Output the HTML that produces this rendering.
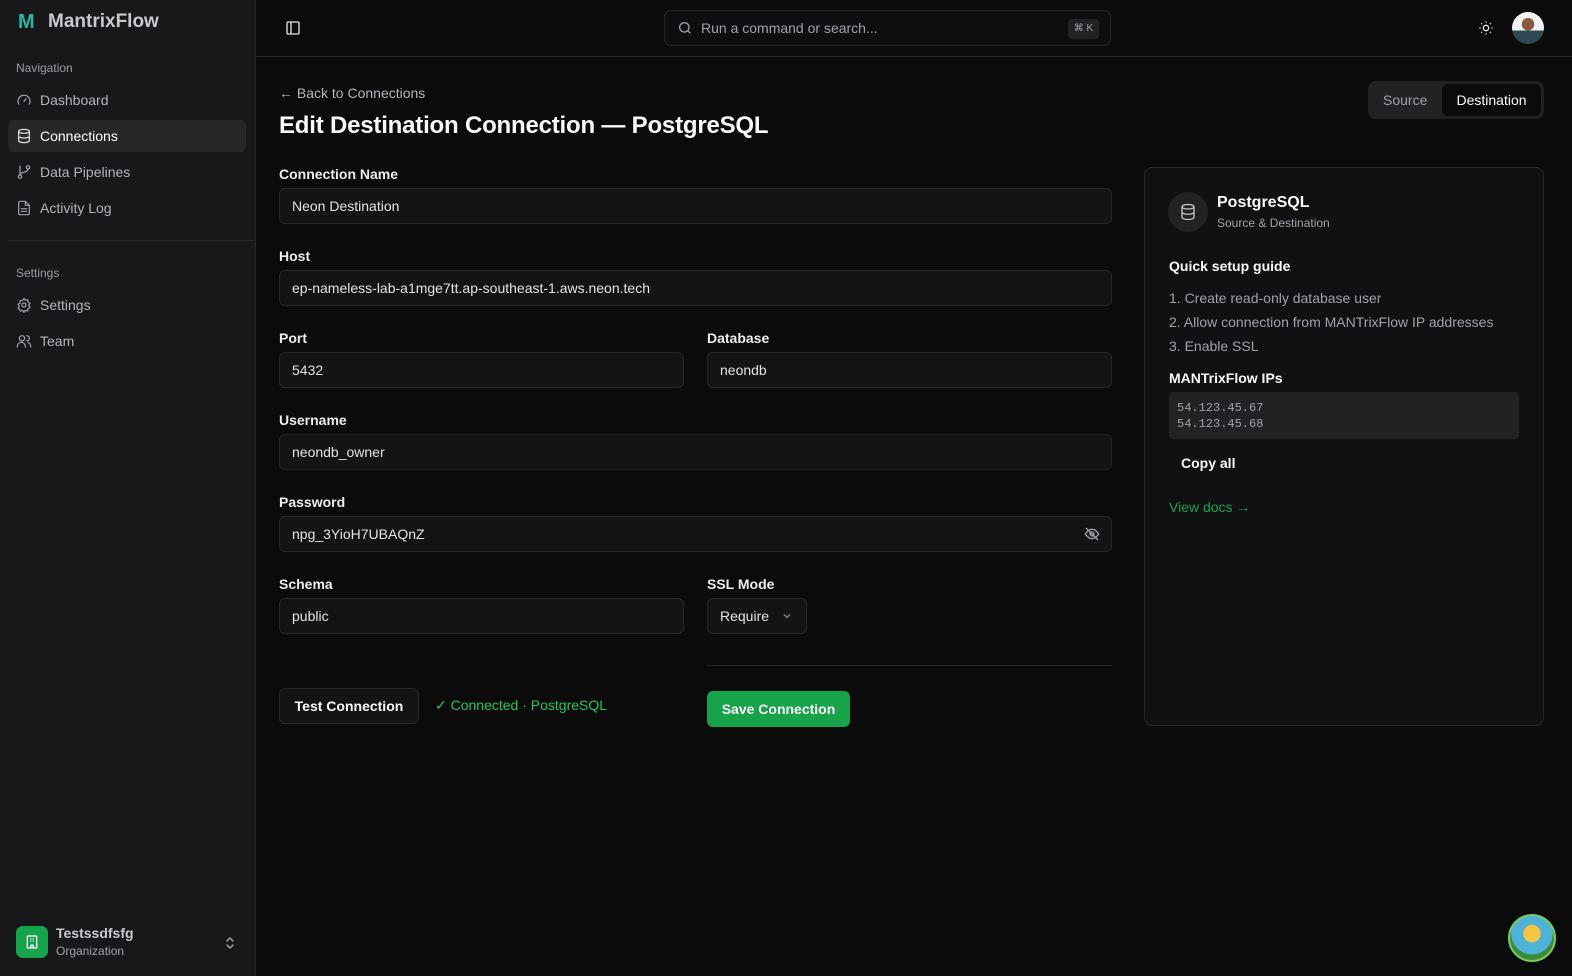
<!DOCTYPE html>
<html><head><style>
*{box-sizing:border-box;margin:0;padding:0}
body{width:1572px;height:976px;background:#0b0b0c;font-family:"Liberation Sans",sans-serif;color:#fafafa;position:relative;overflow:hidden}
.sb{position:absolute;left:0;top:0;width:256px;height:976px;background:#18181b;border-right:1px solid #27272a}
.abs{position:absolute}
.nav{position:absolute;left:8px;width:238px;height:32px;border-radius:6px;display:flex;align-items:center;padding-left:8px;font-size:14px;color:#b4b4bb}
.nav svg{width:16px;height:16px;margin-right:8px;stroke:#a1a1aa;fill:none;stroke-width:1.8;stroke-linecap:round;stroke-linejoin:round}
.sec{position:absolute;left:16px;font-size:12px;color:#9a9aa2}
.lbl{position:absolute;font-size:14px;font-weight:bold;color:#ececef}
.inp{position:absolute;height:36px;border:1px solid #27272a;background:#141416;border-radius:6px;font-size:14px;color:#e4e4e7;padding-left:12px;display:flex;align-items:center}
</style></head><body>
<div class="sb">
  <div class="abs" style="left:18px;top:11px;font-size:20px;font-weight:bold;color:#2ab5a5">M</div>
  <div class="abs" style="left:48px;top:11px;font-size:19px;font-weight:bold;color:#c9c9ce">MantrixFlow</div>
  <div class="sec" style="top:61px">Navigation</div>
  <div class="nav" style="top:84px"><svg viewBox="0 0 24 24"><path d="M4 18a9 9 0 1 1 16 0"/><path d="M12 14l3-4"/></svg>Dashboard</div>
  <div class="nav" style="top:120px;background:#27272a;color:#fff"><svg viewBox="0 0 24 24" style="stroke:#e4e4e7"><ellipse cx="12" cy="5" rx="8" ry="3"/><path d="M4 5v14c0 1.7 3.6 3 8 3s8-1.3 8-3V5M4 12c0 1.7 3.6 3 8 3s8-1.3 8-3"/></svg>Connections</div>
  <div class="nav" style="top:156px"><svg viewBox="0 0 24 24"><circle cx="6" cy="19" r="2.5"/><circle cx="18" cy="5" r="2.5"/><path d="M6 3v13.5M18 7.5c0 6-12 4-12 9"/></svg>Data Pipelines</div>
  <div class="nav" style="top:192px"><svg viewBox="0 0 24 24"><path d="M14 2H6a2 2 0 0 0-2 2v16a2 2 0 0 0 2 2h12a2 2 0 0 0 2-2V8z"/><path d="M14 2v6h6M8 13h8M8 17h8"/></svg>Activity Log</div>
  <div class="abs" style="left:8px;top:240px;width:247px;height:1px;background:#2a2a2e"></div>
  <div class="sec" style="top:266px">Settings</div>
  <div class="nav" style="top:289px"><svg viewBox="0 0 24 24"><circle cx="12" cy="12" r="3"/><path d="M12 2l2 3 3.5-1 .5 3.5 3 2-2 3 2 3-3 2-.5 3.5-3.5-1-2 3-2-3-3.5 1L6 19l-3-2 2-3-2-3 3-2 .5-3.5L10 5z"/></svg>Settings</div>
  <div class="nav" style="top:325px"><svg viewBox="0 0 24 24"><circle cx="9" cy="8" r="4"/><path d="M2 21v-1a6 6 0 0 1 12 0v1M16 4a4 4 0 0 1 0 8M22 21v-1a6 6 0 0 0-4-5.6"/></svg>Team</div>
  <div class="abs" style="left:16px;top:926px;width:32px;height:32px;border-radius:7px;background:#16a34a;display:flex;align-items:center;justify-content:center"><svg width="16" height="16" viewBox="0 0 24 24" fill="none" stroke="#fff" stroke-width="2"><rect x="5" y="3" width="14" height="18" rx="1"/><path d="M9 7h2M13 7h2M9 11h2M13 11h2M10 21v-4h4v4"/></svg></div>
  <div class="abs" style="left:56px;top:925px;font-size:14px;font-weight:bold;color:#c9c9ce">Testssdfsfg</div>
  <div class="abs" style="left:56px;top:944px;font-size:12px;color:#a1a1aa">Organization</div>
  <svg class="abs" style="left:223px;top:935px" width="14" height="16" viewBox="0 0 14 16" fill="none" stroke="#a1a1aa" stroke-width="1.5" stroke-linecap="round"><path d="M4 6l3-3 3 3M4 10l3 3 3-3"/></svg>
</div>
<div class="abs" style="left:256px;top:56px;width:1316px;height:1px;background:#27272a"></div>
<svg class="abs" style="left:285px;top:20px" width="16" height="16" viewBox="0 0 24 24" fill="none" stroke="#e4e4e7" stroke-width="2"><rect x="3" y="3" width="18" height="18" rx="2"/><path d="M9 3v18"/></svg>
<div class="abs" style="left:664px;top:10px;width:447px;height:36px;border:1px solid #27272a;border-radius:7px;background:#0e0e10"></div>
<svg class="abs" style="left:677px;top:20px" width="16" height="16" viewBox="0 0 24 24" fill="none" stroke="#a1a1aa" stroke-width="2"><circle cx="11" cy="11" r="7"/><path d="M20 20l-4-4"/></svg>
<div class="abs" style="left:701px;top:20px;font-size:14px;color:#a1a1aa">Run a command or search...</div>
<div class="abs" style="left:1068px;top:19px;width:31px;height:20px;border-radius:4px;background:#222225;font-size:10px;color:#a1a1aa;text-align:center;line-height:20px">⌘ K</div>
<svg class="abs" style="left:1478px;top:20px" width="16" height="16" viewBox="0 0 24 24" fill="none" stroke="#e4e4e7" stroke-width="2"><circle cx="12" cy="12" r="4"/><path d="M12 2v2M12 20v2M4.9 4.9l1.4 1.4M17.7 17.7l1.4 1.4M2 12h2M20 12h2M4.9 19.1l1.4-1.4M17.7 6.3l1.4-1.4"/></svg>
<div class="abs" style="left:1512px;top:12px;width:32px;height:32px;border-radius:50%;background:radial-gradient(circle at 50% 38%,#8a5a40 0 24%,transparent 25%),linear-gradient(#f2f2f2 0 58%,#2f4a55 58%)"></div>

<div class="abs" style="left:279px;top:85px;font-size:14px;color:#b4b4bb">← Back to Connections</div>
<div class="abs" style="left:279px;top:112px;font-size:24px;font-weight:bold;letter-spacing:-0.2px">Edit Destination Connection — PostgreSQL</div>
<div class="abs" style="left:1368px;top:81px;width:176px;height:38px;border-radius:8px;background:#222225"></div>
<div class="abs" style="left:1383px;top:92px;font-size:14px;color:#a1a1aa">Source</div>
<div class="abs" style="left:1442px;top:84px;width:99px;height:32px;border-radius:6px;background:#0b0b0c;font-size:14px;text-align:center;line-height:32px">Destination</div>

<div class="lbl" style="left:279px;top:166px">Connection Name</div>
<div class="inp" style="left:279px;top:188px;width:833px">Neon Destination</div>
<div class="lbl" style="left:279px;top:248px">Host</div>
<div class="inp" style="left:279px;top:270px;width:833px">ep-nameless-lab-a1mge7tt.ap-southeast-1.aws.neon.tech</div>
<div class="lbl" style="left:279px;top:330px">Port</div>
<div class="inp" style="left:279px;top:352px;width:405px">5432</div>
<div class="lbl" style="left:707px;top:330px">Database</div>
<div class="inp" style="left:707px;top:352px;width:405px">neondb</div>
<div class="lbl" style="left:279px;top:412px">Username</div>
<div class="inp" style="left:279px;top:434px;width:833px">neondb_owner</div>
<div class="lbl" style="left:279px;top:494px">Password</div>
<div class="inp" style="left:279px;top:516px;width:833px">npg_3YioH7UBAQnZ</div>
<svg class="abs" style="left:1084px;top:526px" width="16" height="16" viewBox="0 0 24 24" fill="none" stroke="#a1a1aa" stroke-width="2"><path d="M2 12s4-7 10-7 10 7 10 7-4 7-10 7S2 12 2 12z"/><circle cx="12" cy="12" r="3"/><path d="M3 3l18 18"/></svg>
<div class="lbl" style="left:279px;top:576px">Schema</div>
<div class="inp" style="left:279px;top:598px;width:405px">public</div>
<div class="lbl" style="left:707px;top:576px">SSL Mode</div>
<div class="inp" style="left:707px;top:598px;width:100px">Require <svg style="margin-left:12px" width="12" height="12" viewBox="0 0 12 12" fill="none" stroke="#888" stroke-width="1.3"><path d="M3 4.5l3 3 3-3"/></svg></div>
<div class="abs" style="left:707px;top:665px;width:405px;height:1px;background:#27272a"></div>
<div class="inp" style="left:279px;top:688px;width:140px;justify-content:center;padding:0;font-weight:bold;color:#fafafa">Test Connection</div>
<div class="abs" style="left:435px;top:697px;font-size:14px;color:#22c55e">✓ Connected · PostgreSQL</div>
<div class="abs" style="left:707px;top:691px;width:143px;height:36px;border-radius:6px;background:#16a34a;font-size:14px;font-weight:bold;text-align:center;line-height:36px">Save Connection</div>

<div class="abs" style="left:1144px;top:167px;width:400px;height:559px;border:1px solid #27272a;border-radius:8px;background:#111113"></div>
<div class="abs" style="left:1168px;top:192px;width:40px;height:40px;border-radius:50%;background:#222225;display:flex;align-items:center;justify-content:center"><svg width="18" height="18" viewBox="0 0 24 24" fill="none" stroke="#c4c4c8" stroke-width="1.8"><ellipse cx="12" cy="5" rx="8" ry="3"/><path d="M4 5v14c0 1.7 3.6 3 8 3s8-1.3 8-3V5M4 12c0 1.7 3.6 3 8 3s8-1.3 8-3"/></svg></div>
<div class="abs" style="left:1217px;top:194px;font-size:16px;font-weight:bold">PostgreSQL</div>
<div class="abs" style="left:1217px;top:216px;font-size:12px;color:#a1a1aa">Source &amp; Destination</div>
<div class="abs" style="left:1169px;top:258px;font-size:14px;font-weight:bold">Quick setup guide</div>
<div class="abs" style="left:1169px;top:286px;font-size:14px;color:#a1a1aa;line-height:24px">1. Create read-only database user<br>2. Allow connection from MANTrixFlow IP addresses<br>3. Enable SSL</div>
<div class="abs" style="left:1169px;top:370px;font-size:14px;font-weight:bold">MANTrixFlow IPs</div>
<div class="abs" style="left:1169px;top:392px;width:350px;height:47px;border-radius:4px;background:#222225;font-family:'Liberation Mono',monospace;font-size:12px;color:#a1a1aa;padding:8px;line-height:16px">54.123.45.67<br>54.123.45.68</div>
<div class="abs" style="left:1181px;top:455px;font-size:14px;font-weight:bold">Copy all</div>
<div class="abs" style="left:1169px;top:499px;font-size:14px;color:#16a34a">View docs →</div>
<div class="abs" style="left:1508px;top:914px;width:48px;height:48px;border-radius:50%;background:radial-gradient(circle at 50% 40%,#f5c542 0 25%,#4fb3d9 26% 60%,#3a8a3a 61%);border:2px solid #7acb5a"></div>
</body></html>
